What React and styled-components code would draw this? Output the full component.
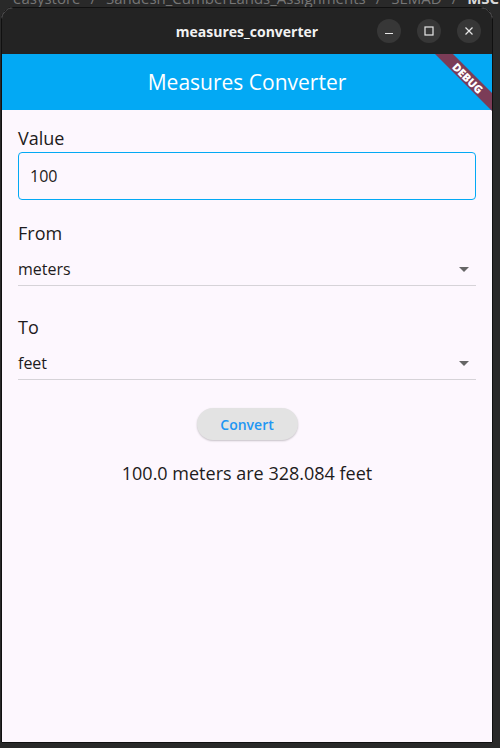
import React from 'react';
import styled, { createGlobalStyle } from 'styled-components';

const GlobalStyle = createGlobalStyle`
    body {
        margin: 0;
        background: #292929;
        font-family: "Open Sans", "Noto Sans", sans-serif;
    }
`;

const Desktop = styled.div`
    width: 500px;
    height: 748px;
    display: flex;
    flex-direction: column;
    background: #292929;
    overflow: hidden;
`;

const PathStrip = styled.div`
    height: 7px;
    box-sizing: border-box;
    display: flex;
    align-items: flex-end;
    padding: 0 0 1px 13px;
    overflow: hidden;
    font-size: 15px;
    line-height: 16px;
    color: #767676;
    white-space: nowrap;
    flex-shrink: 0;
`;

const Crumb = styled.span`
    color: ${props => (props.current ? '#d8d8d8' : '#767676')};
    font-weight: ${props => (props.current ? 700 : 400)};
`;

const Sep = styled.span`
    margin: 0 10px;
`;

const Window = styled.div`
    margin-left: 1px;
    width: 492px;
    height: 736px;
    box-sizing: border-box;
    border: 1px solid #101010;
    border-radius: 12px 12px 0 0;
    overflow: hidden;
    display: flex;
    flex-direction: column;
    background: #fdf7fe;
    flex-shrink: 0;
`;

const TitleBar = styled.div`
    height: 46px;
    flex-shrink: 0;
    background: #232323;
    display: grid;
    grid-template-columns: 1fr auto 1fr;
    align-items: center;
    padding-right: 11px;
    padding-left: 11px;
`;

const WindowTitle = styled.div`
    color: #f2f2f2;
    font-size: 14px;
    font-weight: 700;
    grid-column: 2;
`;

const Controls = styled.div`
    display: flex;
    justify-content: flex-end;
    gap: 16px;
`;

const ControlBtn = styled.div`
    width: 24px;
    height: 24px;
    border-radius: 50%;
    background: #373737;
    display: flex;
    align-items: center;
    justify-content: center;
`;

const AppBar = styled.div`
    position: relative;
    height: 56px;
    flex-shrink: 0;
    background: #03a9f4;
    display: flex;
    align-items: center;
    justify-content: center;
    color: #ffffff;
    font-size: 21px;
`;

const Banner = styled.div`
    position: absolute;
    top: 0;
    right: 0;
    width: 60px;
    height: 60px;
    overflow: hidden;
    pointer-events: none;
    z-index: 2;
`;

const Content = styled.div`
    flex: 1;
    display: flex;
    flex-direction: column;
    padding: 16px;
    color: #1d1b20;
`;

const FieldLabel = styled.div`
    font-size: 18px;
    line-height: 24px;
    margin-top: ${props => props.gap || 0}px;
`;

const ValueInput = styled.input`
    margin-top: 2px;
    height: 48px;
    box-sizing: border-box;
    border: 1px solid #03a9f4;
    border-radius: 4px;
    padding: 0 11px;
    font-family: "Open Sans", sans-serif;
    font-size: 16px;
    color: #1d1b20;
    background: transparent;
    outline: none;
`;

const SelectRow = styled.div`
    margin-top: 7px;
    height: 34px;
    box-sizing: border-box;
    border-bottom: 1px solid #d6d3d8;
    display: flex;
    align-items: center;
    justify-content: space-between;
    font-size: 16px;
`;

const ConvertButton = styled.button`
    align-self: center;
    margin-top: 28px;
    width: 101px;
    height: 32px;
    border: none;
    border-radius: 16px;
    background: #e3e3e3;
    color: #2196f3;
    font-family: "Open Sans", sans-serif;
    font-size: 14px;
    font-weight: 600;
    box-shadow: 0 1px 2px rgba(0, 0, 0, 0.22);
`;

const Result = styled.div`
    margin-top: 21px;
    text-align: center;
    font-size: 18px;
    line-height: 24px;
`;

const DropArrow = () => (
    <svg width="24" height="24" viewBox="0 0 24 24">
        <path d="M7 10l5 5 5-5z" fill="#666666" />
    </svg>
);

const Dropdown = ({ value }) => (
    <SelectRow>
        <span>{value}</span>
        <DropArrow />
    </SelectRow>
);

const App = () => {
    return (
        <>
            <GlobalStyle />
            <Desktop>
                <PathStrip>
                    <Crumb>easystore</Crumb>
                    <Sep>/</Sep>
                    <Crumb>Sandesh_CumberLands_Assignments</Crumb>
                    <Sep>/</Sep>
                    <Crumb>SEMAD</Crumb>
                    <Sep>/</Sep>
                    <Crumb current>MSC</Crumb>
                </PathStrip>
                <Window>
                    <TitleBar>
                        <WindowTitle>measures_converter</WindowTitle>
                        <Controls>
                            <ControlBtn>
                                <svg width="10" height="10" viewBox="0 0 10 10">
                                    <path d="M1 7.5h8" stroke="#e8e8e8" strokeWidth="1.2" />
                                </svg>
                            </ControlBtn>
                            <ControlBtn>
                                <svg width="10" height="10" viewBox="0 0 10 10">
                                    <rect x="1" y="1" width="8" height="8" fill="none" stroke="#e8e8e8" strokeWidth="1.2" />
                                </svg>
                            </ControlBtn>
                            <ControlBtn>
                                <svg width="10" height="10" viewBox="0 0 10 10">
                                    <path d="M1.5 1.5l7 7M8.5 1.5l-7 7" stroke="#e8e8e8" strokeWidth="1.2" />
                                </svg>
                            </ControlBtn>
                        </Controls>
                    </TitleBar>
                    <AppBar>
                        Measures Converter
                        <Banner>
                            <svg width="60" height="60" viewBox="0 0 60 60">
                                <polygon points="3,0 21,0 60,39 60,57" fill="#7b3c57" />
                                <text
                                    x="36"
                                    y="24"
                                    transform="rotate(45 36 24)"
                                    textAnchor="middle"
                                    dominantBaseline="central"
                                    fill="#ffffff"
                                    fontSize="11"
                                    fontWeight="800"
                                    fontFamily="Open Sans, sans-serif"
                                >
                                    DEBUG
                                </text>
                            </svg>
                        </Banner>
                    </AppBar>
                    <Content>
                        <FieldLabel>Value</FieldLabel>
                        <ValueInput defaultValue="100" />
                        <FieldLabel gap={21}>From</FieldLabel>
                        <Dropdown value="meters" />
                        <FieldLabel gap={29}>To</FieldLabel>
                        <Dropdown value="feet" />
                        <ConvertButton>Convert</ConvertButton>
                        <Result>100.0 meters are 328.084 feet</Result>
                    </Content>
                </Window>
            </Desktop>
        </>
    );
};

export default App;
